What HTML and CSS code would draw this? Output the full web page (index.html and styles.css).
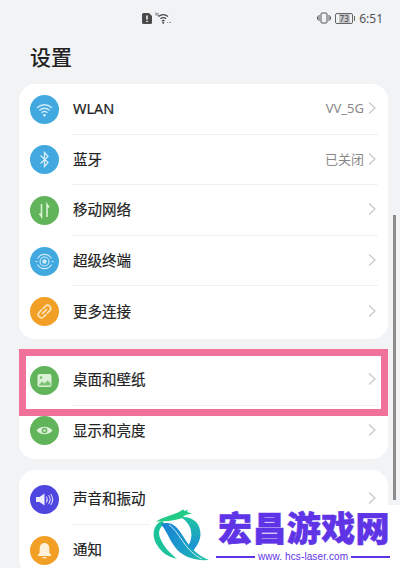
FILE: index.html
```html
<!DOCTYPE html>
<html lang="zh-CN">

<head>
  <meta charset="utf-8">
  <title>设置</title>
  <link rel="stylesheet" href="styles.css">
</head>

<body>
  <div class="status">
    <div class="status-left">
      <svg width="10" height="11" viewBox="0 0 10 11">
        <path d="M1.5 0H7L10 3V9.5A1.5 1.5 0 0 1 8.500 11H1.500A1.500 1.500 0 0 1 0 9.500V1.500A1.500 1.500 0 0 1 1.500 0Z" fill="#4a4a4a" />
        <path d="M5 2.500V6.500M5 7.800V9" stroke="#fff" stroke-width="1.500" />
      </svg>
      <svg width="16" height="12" viewBox="0 0 16 12" fill="none" stroke="#444" stroke-width="1.200">
        <path d="M3.500 4.500C6.500 2 10 2 13 4.500M5.500 6.800C7.500 5.200 9.200 5.200 11 6.800M7 9C7.800 8.300 8.700 8.300 9.500 9" />
        <circle cx="8.200" cy="10.800" r="1" fill="#444" stroke="none" />
        <path d="M1 0.500V3.500M3 1V4" stroke-width="0.800" />
        <path d="M12.500 10.500H13M14.500 10.500H15.500" stroke-width="1.200" />
      </svg>
    </div>
    <div class="status-right">
      <svg width="14" height="12" viewBox="0 0 14 12" fill="none" stroke="#555" stroke-width="1">
        <rect x="4" y="1" width="6" height="10" rx="1" />
        <path d="M2 3V9M12 3V9M0.500 4.500V7.500M13.500 4.500V7.500" />
      </svg>
      <div class="battery"><span class="battery-level">73</span></div>
      <span class="time">6:51</span>
    </div>
  </div>

  <h1 class="heading">设置</h1>

  <div class="card card-first">
    <div class="row">
      <div class="icon icon-blue">
        <svg width="29" height="29" viewBox="0 0 29 29" fill="none" stroke="#cfeaf8" stroke-width="1.400" stroke-linecap="round">
          <path d="M7.500 12.500C11.500 8.800 17.500 8.800 21.500 12.500M9.800 15C12.500 12.600 16.500 12.600 19.200 15M12 17.400C13.500 16.200 15.500 16.200 17 17.400" />
          <circle cx="14.500" cy="20.200" r="1.200" fill="#e4f4fc" stroke="none" />
        </svg>
      </div>
      <div class="row-body">
        <span class="label">WLAN</span>
        <span class="value">VV_5G</span>
        <svg class="chevron" width="8" height="14" viewBox="0 0 8 14"><path d="M1 1.500L7 7L1 12.500" /></svg>
      </div>
    </div>
    <div class="row">
      <div class="icon icon-blue">
        <svg width="29" height="29" viewBox="0 0 29 29" fill="none" stroke="#d6eefa" stroke-width="1.300">
          <path d="M10.500 10.500L18 17.500L14.500 21.500V7.500L18 11.500L10.500 18.500" />
        </svg>
      </div>
      <div class="row-body">
        <span class="label">蓝牙</span>
        <span class="value">已关闭</span>
        <svg class="chevron" width="8" height="14" viewBox="0 0 8 14"><path d="M1 1.500L7 7L1 12.500" /></svg>
      </div>
    </div>
    <div class="row">
      <div class="icon icon-green">
        <svg width="29" height="29" viewBox="0 0 29 29" fill="none" stroke="#d8f0d4" stroke-width="1.600">
          <path d="M11.500 8V20.500L9.500 17.500M17 21V8.500L19 11.500" />
        </svg>
      </div>
      <div class="row-body">
        <span class="label">移动网络</span>
        <svg class="chevron" width="8" height="14" viewBox="0 0 8 14"><path d="M1 1.500L7 7L1 12.500" /></svg>
      </div>
    </div>
    <div class="row">
      <div class="icon icon-blue">
        <svg width="29" height="29" viewBox="0 0 29 29" fill="none" stroke="#cfeaf8" stroke-width="1.100">
          <circle cx="14.500" cy="14.500" r="2.200" fill="#cfeaf8" stroke="none" />
          <circle cx="14.500" cy="14.500" r="4.500" />
          <path d="M7.500 11.500A8 8 0 0 1 21.500 11.500M21.500 17.500A8 8 0 0 1 7.500 17.500M7.500 14.500H5.500M23.500 14.500H21.500" />
        </svg>
      </div>
      <div class="row-body">
        <span class="label">超级终端</span>
        <svg class="chevron" width="8" height="14" viewBox="0 0 8 14"><path d="M1 1.500L7 7L1 12.500" /></svg>
      </div>
    </div>
    <div class="row row-last">
      <div class="icon icon-orange">
        <svg width="29" height="29" viewBox="0 0 29 29" fill="none" stroke="#fde8c4" stroke-width="1.600" stroke-linecap="round">
          <path d="M13 11.500L15.500 9A3.200 3.200 0 0 1 20 13.500L17.500 16" />
          <path d="M16 17.500L13.500 20A3.200 3.200 0 0 1 9 15.500L11.500 13" />
          <path d="M12.500 16.500L16.500 12.500" />
        </svg>
      </div>
      <div class="row-body">
        <span class="label">更多连接</span>
        <svg class="chevron" width="8" height="14" viewBox="0 0 8 14"><path d="M1 1.500L7 7L1 12.500" /></svg>
      </div>
    </div>
  </div>

  <div class="card card-second">
    <div class="row">
      <div class="icon icon-green">
        <svg width="29" height="29" viewBox="0 0 29 29">
          <rect x="7.500" y="8" width="14" height="13" rx="2" fill="#d9f0d5" />
          <circle cx="11" cy="11.500" r="1.200" fill="#6fbb66" />
          <path d="M8.500 19.500L12 15.500L14.500 17.500L17.500 14.500L20.500 17V19.500Z" fill="#7cc274" />
        </svg>
      </div>
      <div class="row-body">
        <span class="label">桌面和壁纸</span>
        <svg class="chevron" width="8" height="14" viewBox="0 0 8 14"><path d="M1 1.500L7 7L1 12.500" /></svg>
      </div>
    </div>
    <div class="row row-last">
      <div class="icon icon-green">
        <svg width="29" height="29" viewBox="0 0 29 29">
          <path d="M6.500 14.500C10.500 9.500 18.500 9.500 22.500 14.500C18.500 19.500 10.500 19.500 6.500 14.500Z" fill="#dff2dc" />
          <circle cx="14.500" cy="14.500" r="2.800" fill="#62b45a" />
          <circle cx="14.500" cy="14.500" r="1.200" fill="#dff2dc" />
        </svg>
      </div>
      <div class="row-body">
        <span class="label">显示和亮度</span>
        <svg class="chevron" width="8" height="14" viewBox="0 0 8 14"><path d="M1 1.500L7 7L1 12.500" /></svg>
      </div>
    </div>
  </div>

  <div class="card card-third">
    <div class="row">
      <div class="icon icon-purple">
        <svg width="29" height="29" viewBox="0 0 29 29" fill="none" stroke="#d9d4fb" stroke-width="1.100" stroke-linecap="round">
          <path d="M6 12H9.500L14.500 8.500V20.500L9.500 17H6Z" fill="#eeebfd" stroke="none" />
          <path d="M16.500 12C17.500 13.500 17.500 15.500 16.500 17M18.800 10.500C20.500 13 20.500 16 18.800 18.500M21 9.500C23 12.500 23 16.500 21 19.500" />
        </svg>
      </div>
      <div class="row-body">
        <span class="label">声音和振动</span>
        <svg class="chevron" width="8" height="14" viewBox="0 0 8 14"><path d="M1 1.500L7 7L1 12.500" /></svg>
      </div>
    </div>
    <div class="row">
      <div class="icon icon-orange">
        <svg width="29" height="29" viewBox="0 0 29 29" fill="#fdf1dc">
          <path d="M14.500 7C17.800 7 19.300 9.500 19.300 12.500V16.500L21 19V20H8V19L9.700 16.500V12.500C9.700 9.500 11.200 7 14.500 7Z" />
          <rect x="12.500" y="21" width="4" height="1.300" rx="0.600" />
        </svg>
      </div>
      <div class="row-body">
        <span class="label">通知</span>
        <svg class="chevron" width="8" height="14" viewBox="0 0 8 14"><path d="M1 1.500L7 7L1 12.500" /></svg>
      </div>
    </div>
  </div>

  <div class="scrollbar"></div>
  <div class="highlight"></div>

  <div class="watermark">
    <svg class="dragon" width="66" height="63" viewBox="0 5 66 63">
      <defs>
        <linearGradient id="band" x1="0" y1="0" x2="1" y2="1">
          <stop offset="0" stop-color="#1b7fd8" />
          <stop offset="0.600" stop-color="#1a9fc8" />
          <stop offset="1" stop-color="#22c4a4" />
        </linearGradient>
        <linearGradient id="arc" x1="0" y1="0" x2="0" y2="1">
          <stop offset="0" stop-color="#1fc4a0" />
          <stop offset="1" stop-color="#1b8cdc" />
        </linearGradient>
      </defs>
      <path d="M30 17C44 16 50.500 24 50.500 34C50.500 40 47 46 43 51L38.500 45.500C41 41 42 36 41 31C40 25 36 20 30 17Z" fill="url(#arc)" />
      <path d="M12 21C2 25 2 37 7 45C11 52 18 57 27 59C20 53 14 47 11 40C8 34 8 28 15 24Z" fill="#1cc39a" />
      <path d="M11 24C22 20 28 28 33 36C39 46 46 55 59 60C45 61 32 57 25 47C19 39 16 30 11 24Z" fill="url(#band)" />
      <path d="M19 25C25 29 29 36 34 43C39 50 44 55 52 59" fill="none" stroke="#fff" stroke-width="0.800" />
      <path d="M6 21.500C13 17 21 15.500 28 12.500L33 9.500L35 11L38 9.500L37 12L42 13.500L35.500 15L31 18.500C23 21 14 21.500 6 21.500Z" fill="#22cb86" />
    </svg>
    <div class="brand">
      <div class="brand-name">宏昌游戏网</div>
      <div class="brand-url">
        <span class="brand-line"></span>
        <span>www. hcs-laser.com</span>
        <span class="brand-line"></span>
      </div>
    </div>
  </div>
</body>

</html>
```

FILE: styles.css
```css
html,
body {
  height: 568px;
  overflow: hidden;
}

body {
  margin: 0;
  position: relative;
  background-color: #f1f3f5;
  color: #222;
  font-family: "Noto Sans", "Noto Sans CJK SC", sans-serif;
}

.status {
  display: flex;
  align-items: center;
  justify-content: space-between;
  height: 36px;
  padding: 0 17px 0 142px;
  box-sizing: border-box;
}

.status-left,
.status-right {
  display: flex;
  align-items: center;
}

.status-left {
  gap: 3px;
}

.status-right {
  gap: 4px;
}

.battery {
  position: relative;
  display: flex;
  align-items: center;
  justify-content: center;
  width: 18px;
  height: 11px;
  margin-right: 2px;
  border: 1px solid #666;
  border-radius: 2px;
  box-sizing: border-box;
}

.battery:after {
  position: absolute;
  right: -3px;
  content: '';
  width: 1px;
  height: 5px;
  background-color: #666;
}

.battery-level {
  padding: 0 1px;
  background-color: #c4c6c8;
  color: #444;
  font-size: 8px;
  line-height: 9px;
}

.time {
  color: #555;
  font-size: 12px;
}

.heading {
  height: 48px;
  margin: 0;
  padding-left: 30px;
  color: #222;
  font-size: 21px;
  font-weight: 500;
  line-height: 43px;
}

.card {
  margin: 0 12px 0 19px;
  background-color: #fff;
  border-radius: 16px;
}

.card-first {
  padding-bottom: 2px;
}

.card-second {
  margin-top: 11px;
  padding: 5px 0 3px;
}

.card-third {
  margin-top: 11px;
  padding-top: 4px;
}

.row {
  display: flex;
  align-items: center;
  height: 50.600px;
  padding: 0 10px 0 11px;
}

.icon {
  flex: none;
  width: 29px;
  height: 29px;
  border-radius: 50%;
}

.icon svg {
  display: block;
}

.icon-blue {
  background-color: #41a9df;
}

.icon-green {
  background-color: #62b45a;
}

.icon-orange {
  background-color: #f29f26;
}

.icon-purple {
  background-color: #4f46e0;
}

.row-body {
  flex: 1;
  display: flex;
  align-items: center;
  align-self: stretch;
  margin-left: 13px;
  padding-left: 1px;
  padding-right: 2px;
  border-bottom: 1px solid #f0f0f0;
}

.row-last .row-body {
  border-bottom: none;
}

.label {
  flex: 1;
  margin-top: -2px;
  font-size: 14.500px;
  font-weight: 400;
  -webkit-text-stroke: 0.200px #222;
}

.value {
  margin-top: -2px;
  margin-right: 4px;
  color: #888;
  font-size: 13px;
}

.chevron {
  margin-top: -1px;
  fill: none;
  stroke: #c9c9c9;
  stroke-width: 1.300;
}

.scrollbar {
  position: absolute;
  left: 393px;
  top: 215px;
  width: 3px;
  height: 285px;
  background-color: #8c8c8c;
}

.highlight {
  position: absolute;
  left: 19px;
  top: 349px;
  width: 369px;
  height: 67px;
  border: 7px solid #f0719a;
  box-sizing: border-box;
}

.watermark {
  position: absolute;
  left: 150px;
  top: 505px;
  display: flex;
  width: 250px;
  height: 63px;
  background-color: #fff;
}

.dragon {
  flex: none;
}

.brand {
  display: flex;
  flex-direction: column;
  color: #5f33e6;
}

.brand-name {
  margin-left: 2px;
  font-family: "Noto Sans CJK SC", sans-serif;
  font-size: 34px;
  font-weight: 900;
  letter-spacing: 0.400px;
  line-height: 43px;
  white-space: nowrap;
  -webkit-text-stroke: 0.600px #5f33e6;
}

.brand-url {
  display: flex;
  align-items: center;
  gap: 3px;
  width: 174px;
  margin-top: 3px;
  font-family: "Liberation Sans", sans-serif;
  font-size: 10px;
  letter-spacing: 0.100px;
  line-height: 12px;
  white-space: nowrap;
}

.brand-line {
  flex: 1;
  height: 1.500px;
  background-color: #5f33e6;
}
```
